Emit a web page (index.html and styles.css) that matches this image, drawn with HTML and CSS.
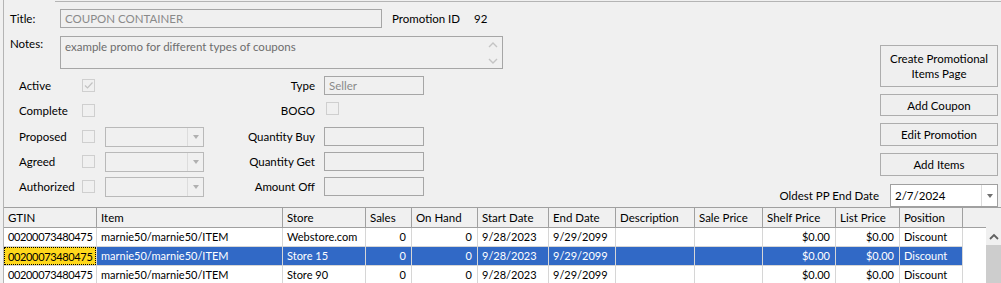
FILE: index.html
```html
<!DOCTYPE html>
<html lang="en">
<head>
    <meta charset="UTF-8">
    <title>Promotion</title>
    <link rel="stylesheet" href="styles.css">
</head>
<body>
<div class="frame">
    <div class="top">
        <div class="form">
            <div class="line">
                <span class="lbl">Title:</span>
                <div class="field title-field">COUPON CONTAINER</div>
                <span class="pid">Promotion ID</span>
                <span class="pid-val">92</span>
            </div>
            <div class="line notes-line">
                <span class="lbl notes-lbl">Notes:</span>
                <div class="field notes-field">
                    <span>example promo for different types of coupons</span>
                    <span class="vscroll">
                        <svg width="10" height="6" viewBox="0 0 10 6"><path d="M1 5 L5 1 L9 5" fill="none" stroke="#c4c4c4" stroke-width="1.4"/></svg>
                        <svg width="10" height="6" viewBox="0 0 10 6"><path d="M1 1 L5 5 L9 1" fill="none" stroke="#c4c4c4" stroke-width="1.4"/></svg>
                    </span>
                </div>
            </div>
            <div class="opts">
                <span class="opt">Active</span>
                <span class="chk"><svg width="11" height="11" viewBox="0 0 11 11"><path d="M2 5.5 L4.5 8 L9.5 2.5" fill="none" stroke="#c2c2c2" stroke-width="1.2"/></svg></span>
                <span></span>
                <span class="rlbl">Type</span>
                <div class="field small-field">Seller</div>

                <span class="opt">Complete</span>
                <span class="chk"></span>
                <span></span>
                <span class="rlbl">BOGO</span>
                <span class="chk bogo"></span>

                <span class="opt">Proposed</span>
                <span class="chk"></span>
                <div class="combo"><span class="combo-btn"><i class="tri"></i></span></div>
                <span class="rlbl">Quantity Buy</span>
                <div class="field small-field"></div>

                <span class="opt">Agreed</span>
                <span class="chk"></span>
                <div class="combo"><span class="combo-btn"><i class="tri"></i></span></div>
                <span class="rlbl">Quantity Get</span>
                <div class="field small-field"></div>

                <span class="opt">Authorized</span>
                <span class="chk"></span>
                <div class="combo"><span class="combo-btn"><i class="tri"></i></span></div>
                <span class="rlbl">Amount Off</span>
                <div class="field small-field"></div>
            </div>
        </div>
        <div class="actions">
            <button class="btn tall">Create Promotional<br>Items Page</button>
            <button class="btn">Add Coupon</button>
            <button class="btn">Edit Promotion</button>
            <button class="btn">Add Items</button>
            <div class="date-row">
                <span>Oldest PP End Date</span>
                <div class="date-combo"><span class="date-val">2/7/2024</span><span class="combo-btn"><i class="tri dark"></i></span></div>
            </div>
        </div>
    </div>

    <div class="grid-wrap">
        <table class="items">
            <thead>
                <tr>
                    <th class="c-gtin">GTIN</th>
                    <th class="c-item">Item</th>
                    <th class="c-store">Store</th>
                    <th class="c-sales">Sales</th>
                    <th class="c-hand">On Hand</th>
                    <th class="c-start">Start Date</th>
                    <th class="c-end">End Date</th>
                    <th class="c-desc">Description</th>
                    <th class="c-sale">Sale Price</th>
                    <th class="c-shelf">Shelf Price</th>
                    <th class="c-list">List Price</th>
                    <th class="c-pos">Position</th>
                    <th class="c-fill"></th>
                </tr>
            </thead>
            <tbody>
                <tr>
                    <td class="gtin">00200073480475</td>
                    <td>marnie50/marnie50/ITEM</td>
                    <td>Webstore.com</td>
                    <td class="num">0</td>
                    <td class="num">0</td>
                    <td>9/28/2023</td>
                    <td>9/29/2099</td>
                    <td></td>
                    <td></td>
                    <td class="num">$0.00</td>
                    <td class="num">$0.00</td>
                    <td>Discount</td>
                    <td class="fill"></td>
                </tr>
                <tr class="selected">
                    <td class="gtin current"><span>00200073480475</span></td>
                    <td>marnie50/marnie50/ITEM</td>
                    <td>Store 15</td>
                    <td class="num">0</td>
                    <td class="num">0</td>
                    <td>9/28/2023</td>
                    <td>9/29/2099</td>
                    <td></td>
                    <td></td>
                    <td class="num">$0.00</td>
                    <td class="num">$0.00</td>
                    <td>Discount</td>
                    <td class="fill"></td>
                </tr>
                <tr>
                    <td class="gtin">00200073480475</td>
                    <td>marnie50/marnie50/ITEM</td>
                    <td>Store 90</td>
                    <td class="num">0</td>
                    <td class="num">0</td>
                    <td>9/28/2023</td>
                    <td>9/29/2099</td>
                    <td></td>
                    <td></td>
                    <td class="num">$0.00</td>
                    <td class="num">$0.00</td>
                    <td>Discount</td>
                    <td class="fill"></td>
                </tr>
            </tbody>
        </table>
        <div class="scrollbar">
            <span class="sb-up"><svg width="10" height="7" viewBox="0 0 10 7"><path d="M1 6 L5 2 L9 6" fill="none" stroke="#606060" stroke-width="1.8"/></svg></span>
            <span class="sb-track"></span>
        </div>
    </div>
</div>
</body>
</html>
```

FILE: styles.css
```css
:root {
    --bg: #f0f0f0;
    --line: #a0a0a0;
    --field-border: #a6a6a6;
    --muted: #8a8a8a;
    --select: #3169c6;
}

* {
    box-sizing: border-box;
}

body {
    margin: 0;
    background: var(--bg);
    font-family: Lato, 'Open Sans', sans-serif;
    font-size: 11.5px;
    color: #000;
    overflow: hidden;
}

.frame {
    margin-left: 3px;
    height: 283px;
    border-left: 1px solid #b4b4b4;
    position: relative;
}

.frame::before {
    content: '';
    position: absolute;
    left: 51px;
    right: 0;
    top: 1px;
    height: 1px;
    background: #b4b4b4;
}

.top {
    display: flex;
    padding: 9px 3px 0 6px;
    height: 207px;
}

.line {
    display: flex;
    align-items: center;
}

.lbl {
    width: 50px;
}

.field {
    border: 1px solid var(--field-border);
    color: var(--muted);
    padding: 0 4px;
    height: 19px;
    line-height: 17px;
    white-space: nowrap;
}

.title-field {
    width: 322px;
}

.pid {
    margin-left: 10px;
}

.pid-val {
    margin-left: 14px;
}

.notes-line {
    margin-top: 8px;
    align-items: flex-start;
}

.notes-lbl {
    padding-top: 1px;
}

.notes-field {
    width: 443px;
    height: 33px;
    display: flex;
    justify-content: space-between;
    color: #6d6d6d;
    padding-top: 1px;
    padding-right: 0;
}

.vscroll {
    width: 18px;
    display: flex;
    flex-direction: column;
    align-items: center;
    justify-content: space-between;
    padding: 5px 0 4px;
    margin-top: -1px;
    height: 31px;
}

.opts {
    display: grid;
    grid-template-columns: 63px 23px 99px 120px 100px;
    grid-auto-rows: 19px;
    row-gap: 6.25px;
    align-items: center;
    margin: 7px 0 0 9px;
}

.rlbl {
    text-align: right;
    padding-right: 9px;
}

.chk {
    width: 13px;
    height: 13px;
    border: 1px solid #cfcfcf;
    display: flex;
    align-items: center;
    justify-content: center;
}

.bogo {
    margin-left: 2px;
    margin-top: -4px;
}

.small-field {
    width: 100px;
}

.combo {
    width: 99px;
    height: 20px;
    border: 1px solid #b9b9b9;
    display: flex;
    justify-content: flex-end;
    align-self: start;
}

.combo-btn {
    width: 16px;
    border-left: 1px solid #dcdcdc;
    display: flex;
    align-items: center;
    justify-content: center;
}

.tri {
    width: 0;
    height: 0;
    border-left: 3.5px solid transparent;
    border-right: 3.5px solid transparent;
    border-top: 4px solid #b0b0b0;
}

.tri.dark {
    border-top-color: #707070;
}

.actions {
    margin-left: auto;
    width: 260px;
    padding-top: 36px;
    display: flex;
    flex-direction: column;
    align-items: flex-end;
    gap: 7px;
}

.btn {
    width: 118px;
    height: 23px;
    background: #efefef;
    border: 1px solid #adadad;
    font-family: inherit;
    font-size: 11.5px;
    color: #000;
    padding: 0;
    line-height: 15px;
}

.btn.tall {
    height: 42px;
}

.date-row {
    display: flex;
    align-items: center;
    gap: 11px;
    margin-top: 1px;
    white-space: nowrap;
}

.date-combo {
    width: 108px;
    height: 23px;
    border: 1px solid #a0a0a0;
    background: #fff;
    display: flex;
}

.date-val {
    flex: 1;
    padding-left: 4px;
    line-height: 21px;
}

.grid-wrap {
    position: relative;
}

.items {
    table-layout: fixed;
    border-collapse: separate;
    border-spacing: 0;
    width: 997px;
    white-space: nowrap;
}

.items th,
.items td {
    padding: 0 4px;
    overflow: hidden;
    text-align: left;
    font-weight: normal;
}

.items th {
    height: 21px;
    border-top: 1px solid var(--line);
    border-bottom: 1px solid var(--line);
    border-right: 1px solid var(--line);
    background: var(--bg);
    line-height: 18px;
}

.items th.c-fill {
    border-right: 0;
}

.items td {
    height: 19px;
    line-height: 18px;
    font-size: 11px;
    background: #fff;
    border-right: 1px solid #d6d6d6;
    border-bottom: 1px solid #d6d6d6;
}

.items td.gtin {
    letter-spacing: -0.35px;
}

.items td.num {
    text-align: right;
    padding-right: 5px;
}

.items td.fill {
    border: 0;
}

.selected td {
    background: var(--select);
    color: #fff;
}

.selected td.fill {
    background: #fff;
}

.selected td.current {
    background: #ffd81b;
    color: #000;
    padding: 0;
}

.current span {
    display: block;
    height: 18px;
    padding: 0 3px;
    border: 1px dotted #000;
}

.c-gtin { width: 93px; }
.c-item { width: 186px; }
.c-store { width: 83px; }
.c-sales { width: 46px; }
.c-hand { width: 66px; }
.c-start { width: 71px; }
.c-end { width: 67px; }
.c-desc { width: 79px; }
.c-sale { width: 68px; }
.c-shelf { width: 73px; }
.c-list { width: 64px; }
.c-pos { width: 63px; }
.c-fill { width: 38px; }

.scrollbar {
    position: absolute;
    right: 0;
    top: 20px;
    bottom: 0;
    width: 15px;
    display: flex;
    flex-direction: column;
}

.sb-up {
    height: 18px;
    background: var(--bg);
    display: flex;
    align-items: center;
    justify-content: center;
}

.sb-track {
    flex: 1;
    background: #cdcdcd;
}
```
